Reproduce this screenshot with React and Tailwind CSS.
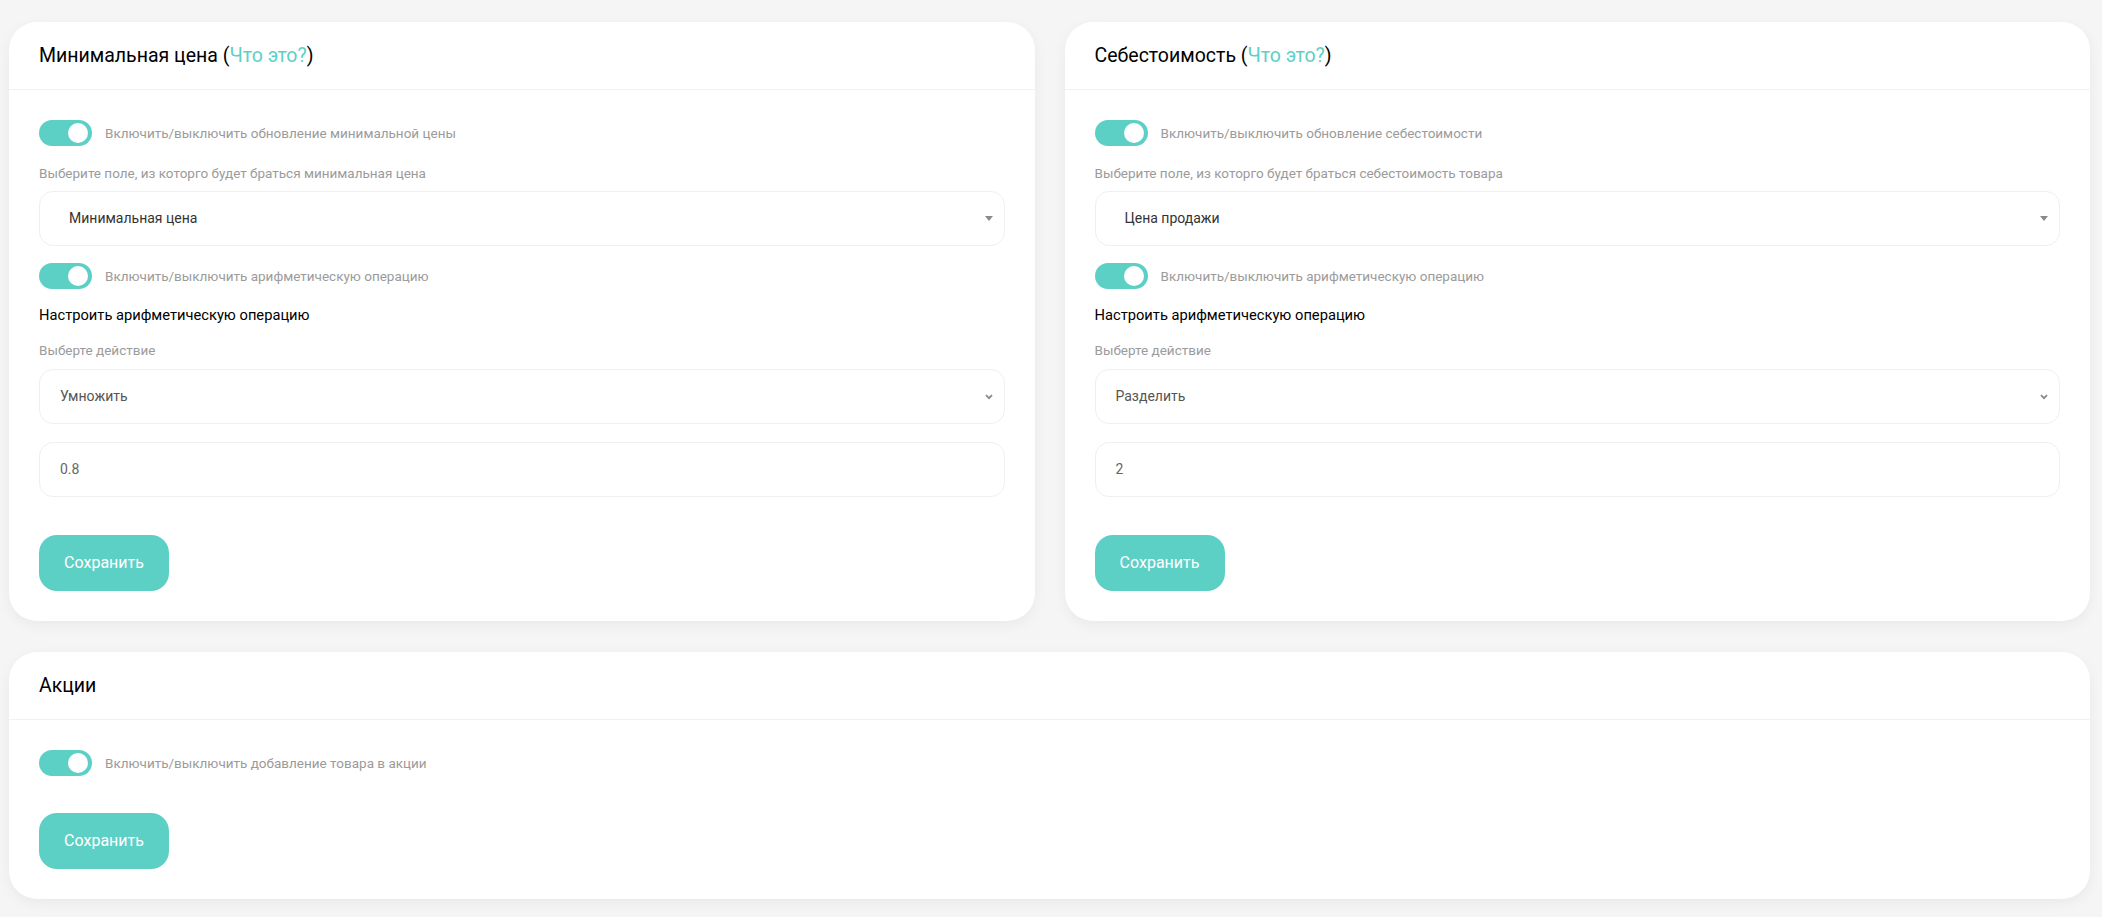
import React, { useState } from 'react';

const Toggle = ({ on, onChange, label }) => (
  <div className="flex items-center gap-[13px]">
    <button
      type="button"
      onClick={onChange}
      className={`relative h-[26px] w-[53px] shrink-0 rounded-full transition-colors ${on ? 'bg-[#5dd0c6]' : 'bg-[#d9d9d9]'}`}
    >
      <span
        className={`absolute top-[3px] h-[20px] w-[20px] rounded-full bg-white transition-all ${on ? 'left-[29px]' : 'left-[4px]'}`}
      />
    </button>
    <span className="text-[13.5px] leading-[20px] text-[#9b9b9b]">{label}</span>
  </div>
);

const Caret = () => (
  <svg width="8" height="5" viewBox="0 0 8 5" className="shrink-0">
    <path d="M0 0h8L4 5z" fill="#8a8a8a" />
  </svg>
);

const Chevron = () => (
  <svg width="8" height="6" viewBox="0 0 8 6" className="shrink-0">
    <path d="M1 1.2l3 3 3-3" fill="none" stroke="#8a8a8a" strokeWidth="1.8" />
  </svg>
);

const Field = ({ children, icon, className = '' }) => (
  <div className={`flex h-[55px] items-center justify-between rounded-[14px] border border-[#efefef] pr-[11px] ${className}`}>
    {children}
    {icon}
  </div>
);

const Card = ({ title, link, children }) => (
  <div className="rounded-[28px] bg-white shadow-[0_4px_14px_rgba(0,0,0,0.05)]">
    <div className="flex h-[68px] items-center border-b border-[#f2f2f2] px-[30px] text-[19.5px] text-black">
      <span>
        {title}
        {link && (
          <>
            {' ('}
            <a className="text-[#5dd0c6]">Что это?</a>
            {')'}
          </>
        )}
      </span>
    </div>
    <div className="px-[30px] pb-[30px] pt-[30px]">{children}</div>
  </div>
);

const SaveButton = ({ className = '' }) => (
  <button
    type="button"
    className={`h-[56px] w-[130px] rounded-[18px] bg-[#5dd0c6] text-[16px] text-white ${className}`}
  >
    Сохранить
  </button>
);

const PriceCard = ({ title, updateLabel, fieldLabel, field, action, value }) => {
  const [update, setUpdate] = useState(true);
  const [arith, setArith] = useState(true);

  return (
    <Card title={title} link>
      <Toggle on={update} onChange={() => setUpdate(!update)} label={updateLabel} />
      <div className="mt-[17px] text-[13.5px] leading-[20px] text-[#9b9b9b]">{fieldLabel}</div>
      <Field className="mt-[8px] pl-[29px]" icon={<Caret />}>
        <span className="text-[14px] text-[#333]">{field}</span>
      </Field>
      <div className="mt-[17px]">
        <Toggle on={arith} onChange={() => setArith(!arith)} label="Включить/выключить арифметическую операцию" />
      </div>
      <div className="mt-[16px] text-[14.7px] leading-[20px] text-black">Настроить арифметическую операцию</div>
      <div className="mt-[15px] text-[13.5px] leading-[20px] text-[#9b9b9b]">Выберте действие</div>
      <Field className="mt-[9px] pl-[20px]" icon={<Chevron />}>
        <span className="text-[14px] text-[#555]">{action}</span>
      </Field>
      <Field className="mt-[18px] pl-[20px]">
        <span className="text-[14px] text-[#666]">{value}</span>
      </Field>
      <SaveButton className="mt-[38px]" />
    </Card>
  );
};

export default function App() {
  const [promo, setPromo] = useState(true);

  return (
    <div className="min-h-screen bg-[#f5f5f5] pb-[20px] pl-[9px] pr-[12px] pt-[22px] font-['Roboto',sans-serif]">
      <div className="grid grid-cols-2 gap-[30px]">
        <PriceCard
          title="Минимальная цена"
          updateLabel="Включить/выключить обновление минимальной цены"
          fieldLabel="Выберите поле, из которго будет браться минимальная цена"
          field="Минимальная цена"
          action="Умножить"
          value="0.8"
        />
        <PriceCard
          title="Себестоимость"
          updateLabel="Включить/выключить обновление себестоимости"
          fieldLabel="Выберите поле, из которго будет браться себестоимость товара"
          field="Цена продажи"
          action="Разделить"
          value="2"
        />
      </div>
      <div className="mt-[31px]">
        <Card title="Акции">
          <Toggle on={promo} onChange={() => setPromo(!promo)} label="Включить/выключить добавление товара в акции" />
          <SaveButton className="mt-[37px]" />
        </Card>
      </div>
    </div>
  );
}
